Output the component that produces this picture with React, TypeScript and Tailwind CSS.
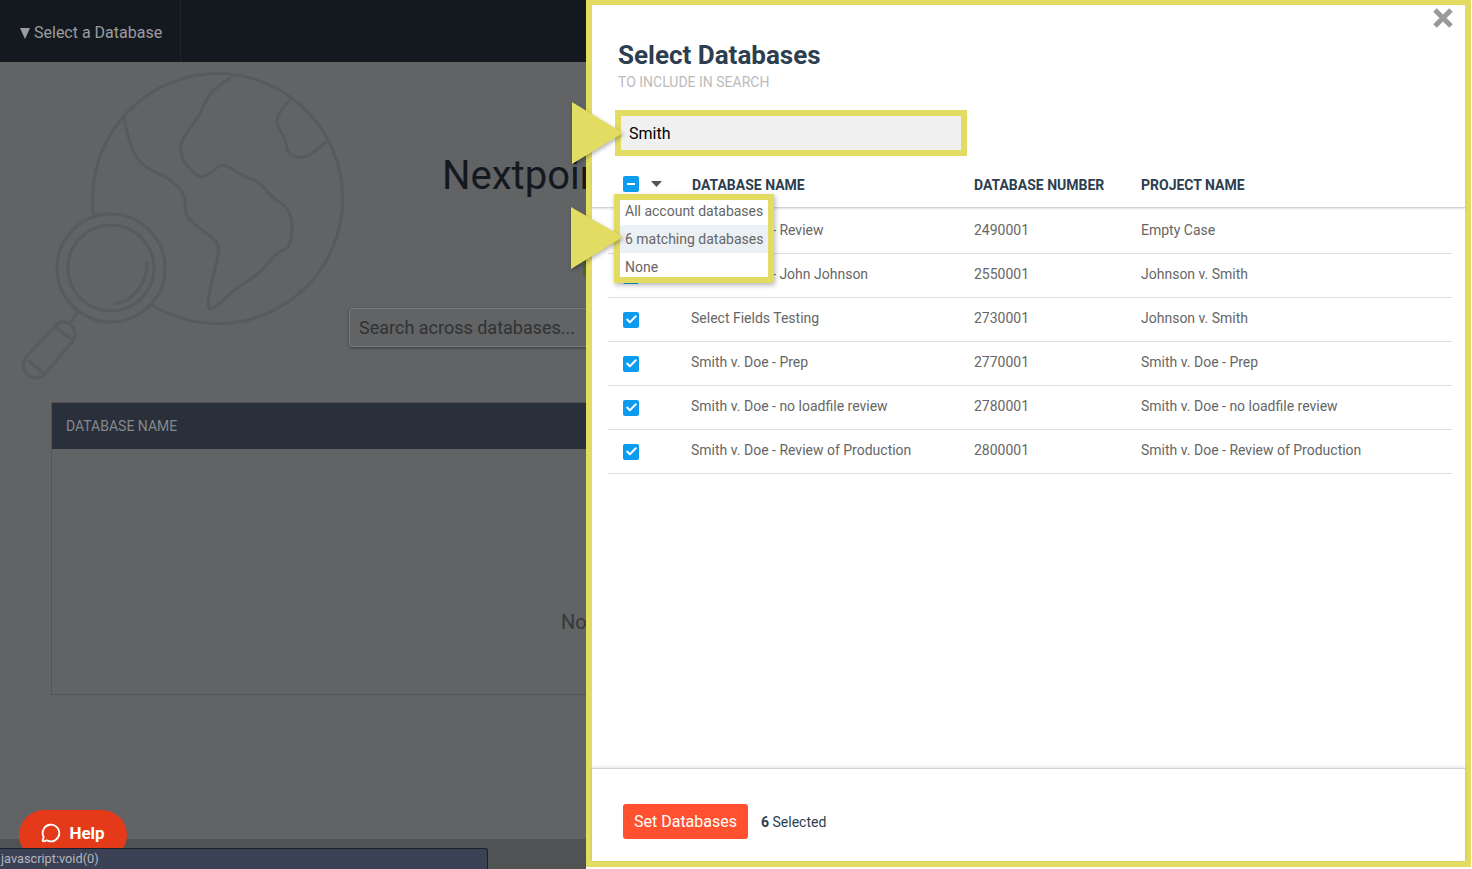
import { Check, MessageCircle } from 'lucide-react';

const rows = [
  { name: 'Smith v. Doe - Review', number: '2490001', project: 'Empty Case' },
  { name: 'Smith v. Doe - John Johnson', number: '2550001', project: 'Johnson v. Smith' },
  { name: 'Select Fields Testing', number: '2730001', project: 'Johnson v. Smith' },
  { name: 'Smith v. Doe - Prep', number: '2770001', project: 'Smith v. Doe - Prep' },
  { name: 'Smith v. Doe - no loadfile review', number: '2780001', project: 'Smith v. Doe - no loadfile review' },
  { name: 'Smith v. Doe - Review of Production', number: '2800001', project: 'Smith v. Doe - Review of Production' },
];

const continentA: [number, number][] = [
  [124, 118], [130, 147], [143, 167], [173, 180], [186, 197], [184, 217], [216, 240], [220, 250], [207, 300],
  [210, 313], [233, 290], [262, 272], [275, 253], [292, 247], [292, 210], [271, 197], [260, 182], [241, 175],
  [222, 162], [209, 175], [196, 178], [175, 148], [199, 117], [209, 93], [230, 78],
];
const continentB: [number, number][] = [[290, 100], [272, 117], [286, 140], [288, 155], [305, 159], [326, 142]];

// quadratic curve through the midpoints, keeps the coast lines soft
function smooth(pts: [number, number][]) {
  let d = `M${pts[0][0]} ${pts[0][1]}`;
  for (let i = 1; i < pts.length - 1; i++) {
    const mx = (pts[i][0] + pts[i + 1][0]) / 2;
    const my = (pts[i][1] + pts[i + 1][1]) / 2;
    d += ` Q${pts[i][0]} ${pts[i][1]} ${mx} ${my}`;
  }
  const last = pts[pts.length - 1];
  return d + ` L${last[0]} ${last[1]}`;
}

function GlobeArt() {
  return (
    <svg className="absolute left-0 top-0" width="400" height="400" viewBox="0 0 400 400" fill="none" stroke="#595a5c" strokeWidth="3" strokeLinecap="round" strokeLinejoin="round">
      <path d="M94 217 A125 125 0 1 1 152 305" />
      <path d={smooth(continentA)} />
      <path d={smooth(continentB)} />
      <circle cx="111" cy="268" r="54" />
      <circle cx="111" cy="268" r="43" />
      <path d="M147 263 A38 41 0 0 1 115 304" />
      <path d="M77 313 L70 323" />
      <path d="M56 325 Q63 318 72 326 Q78 333 72 342 L45 374 Q37 381 28 375 Q20 367 25 358 Z" />
      <path d="M55 327 L71 339 M29 361 L43 373" />
    </svg>
  );
}

function Box({ children }: { children: React.ReactNode }) {
  return <span className="flex h-4 w-4 items-center justify-center rounded-[2px] bg-[#0b9cf2] text-white">{children}</span>;
}

function Arrow({ className, points }: { className: string; points: string }) {
  return (
    <svg className={`absolute drop-shadow-[1px_2px_2px_rgba(0,0,0,0.3)] ${className}`} width="56" height="66" viewBox="0 0 56 66">
      <polygon points={points} fill="#e2dc62" />
    </svg>
  );
}

export default function App() {
  return (
    <div className="relative flex h-[869px] w-[1472px] overflow-hidden font-['Roboto',sans-serif]">
      {/* dimmed page behind the drawer */}
      <div className="relative flex w-[586px] shrink-0 flex-col overflow-hidden bg-[#616365]">
        <div className="flex h-[62px] shrink-0 bg-[#141920]">
          <div className="flex w-[181px] items-center gap-1 border-r border-[#1e242d] pl-5 pt-1 text-base text-[#9b9d9f]">
            <svg width="10" height="11" viewBox="0 0 10 11"><polygon points="0,0 10,0 5,11" fill="#9b9d9f" /></svg>
            Select a Database
          </div>
        </div>
        <GlobeArt />
        <div className="relative flex flex-1 flex-col">
          <div className="ml-[442px] mt-[88px] whitespace-nowrap text-[40px] leading-[52px] text-[#141920]">Nextpoint Search</div>
          <div className="ml-[583px] mt-[53px] h-[22px] w-[60px] shrink-0 rounded-[3px] bg-[#46691f]" />
          <div className="ml-[349px] mt-[31px] flex h-[39px] w-[420px] shrink-0 items-center rounded-[3px] border border-[#77797b] bg-[#616365] pl-[9px] text-lg text-[#303234] shadow-[0_1px_3px_rgba(0,0,0,0.4)]">
            Search across databases...
          </div>
          <div className="ml-[51px] mt-[55px] flex h-[293px] w-[900px] shrink-0 flex-col border border-[#525456]">
            <div className="flex h-[46px] shrink-0 items-center bg-[#2a303b] pl-[14px] text-sm text-[#85888c]">DATABASE NAME</div>
            <div className="whitespace-nowrap pl-[509px] pt-[159px] text-xl leading-7 text-[#37393b]">No databases</div>
          </div>
          <div className="mt-auto h-[30px] shrink-0 bg-[#505354]" />
        </div>
        <div className="absolute left-[19px] top-[810px] flex h-[50px] w-[108px] items-start justify-center gap-2 rounded-[25px] bg-[#e43a1a] pt-[11px] text-[17px] font-bold text-white">
          <MessageCircle size={20} strokeWidth={2.2} className="mt-0.5" />
          Help
        </div>
        <div className="absolute bottom-0 left-0 flex h-[21px] w-[488px] items-center rounded-tr-[3px] border-r border-t border-[#1c1f27] bg-[#3b4155] pl-px text-[12.75px] text-[#b4b7bf]">
          javascript:void(0)
        </div>
      </div>

      {/* drawer, the yellow frame stops a little short of the window edge */}
      <div className="flex flex-1 flex-col bg-white pb-[2px] pr-px">
        <div className="flex flex-1 flex-col border-[6px] border-t-[5px] border-[#e2dc62]">
          <div className="flex justify-end pr-[12px] pt-[3px]">
            <svg width="20" height="20" viewBox="0 0 20 20" stroke="#999999" strokeWidth="5">
              <path d="M2 2 L18 18 M18 2 L2 18" />
            </svg>
          </div>
          <div className="pl-[26px] pt-[10px] text-[26px] font-bold leading-[34px] text-[#2c3e50]">Select Databases</div>
          <div className="pl-[26px] pt-[1px] text-sm leading-[18px] text-[#bbbbbb]">TO INCLUDE IN SEARCH</div>
          <div className="ml-[23px] mt-[19px] flex h-[46px] w-[352px] items-center border-[6px] border-[#e2dc62] bg-[#f0f0f0] pl-2 pt-0.5 text-base text-black">Smith</div>
          <div className="mt-[6px] grid h-[46px] grid-cols-[69px_282px_167px_1fr] items-center border-b border-[#d4d4d4] pl-[31px] text-sm font-bold text-[#2c3e50] shadow-[0_1px_2px_rgba(0,0,0,0.12)]">
            <div className="flex items-center gap-3 pb-0.5">
              <Box><span className="h-0.5 w-2 bg-white" /></Box>
              <svg width="11" height="6" viewBox="0 0 11 6"><polygon points="0,0 11,0 5.5,6" fill="#555555" /></svg>
            </div>
            <div>DATABASE NAME</div>
            <div>DATABASE NUMBER</div>
            <div>PROJECT NAME</div>
          </div>
          <div className="ml-4 mr-[13px] flex-1 pt-[2px]">
            {rows.map((row) => (
              <div key={row.number} className="grid h-11 grid-cols-[68px_283px_167px_1fr] items-center border-b border-[#dddddd] pb-1 pl-[15px] text-sm text-[#666666]">
                <div className="pt-1"><Box><Check size={13} strokeWidth={3.5} /></Box></div>
                <div>{row.name}</div>
                <div>{row.number}</div>
                <div>{row.project}</div>
              </div>
            ))}
          </div>
          <div className="flex h-[93px] shrink-0 items-center gap-[13px] border-t border-[#d4d4d4] pl-[31px] pt-[13px] shadow-[0_-1px_3px_rgba(0,0,0,0.12)]">
            <div className="flex h-[35px] w-[125px] items-center justify-center rounded-[3px] bg-[#ff512f] text-base text-white">Set Databases</div>
            <div className="text-sm text-[#2c3e50]"><span className="font-bold">6</span> Selected</div>
          </div>
        </div>
      </div>

      {/* select-all menu with the callout frame */}
      <div className="absolute left-[614px] top-[194px] w-[160px] border-[6px] border-[#e2dc62] bg-white text-sm text-[#666666] shadow-[1px_2px_5px_rgba(0,0,0,0.3)]">
        <div className="flex h-[25px] items-center pb-1 pl-[5px]">All account databases</div>
        <div className="flex h-7 items-center bg-[#eaf0f3] pl-[5px]">6 matching databases</div>
        <div className="flex h-[24px] items-center pl-[5px] pt-1">None</div>
      </div>
      <Arrow className="left-[572px] top-[101px]" points="0,1 51,32 0,63" />
      <Arrow className="left-[571px] top-[206px]" points="0,1 52,31 0,63" />
    </div>
  );
}
